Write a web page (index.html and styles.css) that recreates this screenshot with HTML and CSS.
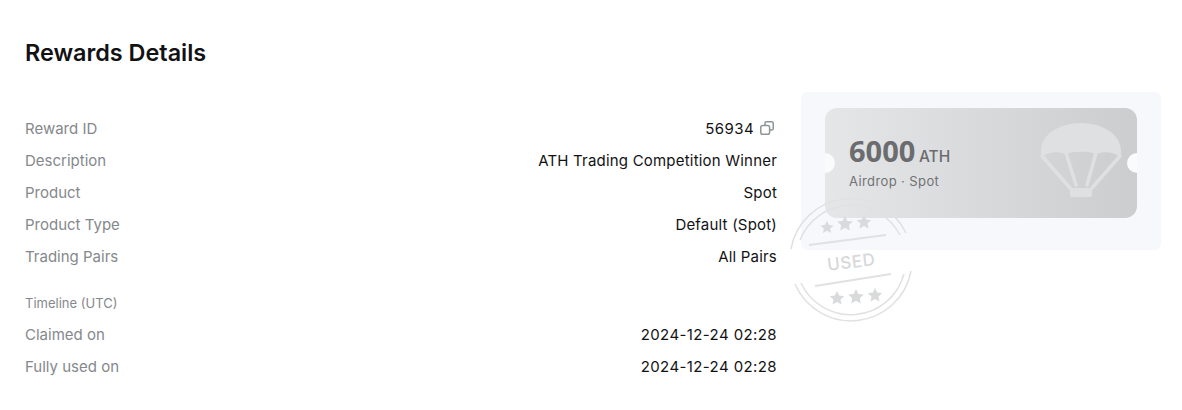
FILE: index.html
```html
<!DOCTYPE html>
<html lang="en">
<head>
    <meta charset="UTF-8">
    <title>Rewards Details</title>
    <link rel="stylesheet" href="styles.css">
</head>
<body>
    <h1>Rewards Details</h1>
    <div class="details">
        <div class="info">
            <div class="row"><span class="label">Reward ID</span><span class="value value-id"><span class="num">56934</span>
                <svg class="copy" viewBox="0 0 14 14" width="14" height="14" fill="none" stroke="#919498" stroke-width="1.500">
                    <path d="M5 4V2.200C5 1.400 5.500.8 6.300.8h5.500c.8 0 1.400.6 1.400 1.400v5.500c0 .8-.6 1.400-1.400 1.400H10"/>
                    <rect x=".8" y="4.400" width="8.800" height="8.800" rx="1.800"/>
                </svg></span></div>
            <div class="row"><span class="label">Description</span><span class="value">ATH Trading Competition Winner</span></div>
            <div class="row"><span class="label">Product</span><span class="value">Spot</span></div>
            <div class="row"><span class="label">Product Type</span><span class="value">Default (Spot)</span></div>
            <div class="row"><span class="label">Trading Pairs</span><span class="value">All Pairs</span></div>
            <div class="timeline">Timeline (UTC)</div>
            <div class="row"><span class="label">Claimed on</span><span class="value num">2024-12-24 02:28</span></div>
            <div class="row"><span class="label">Fully used on</span><span class="value num">2024-12-24 02:28</span></div>
        </div>
        <div class="panel">
            <div class="ticket">
                <div class="amount">6000 <span class="unit">ATH</span></div>
                <div class="kind">Airdrop · Spot</div>
                <svg class="chute" viewBox="0 0 82 76" width="82" height="76">
                    <path d="M1 29C1 12 20 1 41 1s40 11 40 28c0 2-.3 4-1 6-6-5-16-6-24-3-5-3-25-3-30 0-8-3-18-2-24 3-.7-2-1-4-1-6z" fill="#dfe0e2"/>
                    <g stroke="#dfe0e2" stroke-width="3.500" fill="none" stroke-linecap="round">
                        <path d="M2 34L30 66"/>
                        <path d="M26 31L36 63"/>
                        <path d="M56 31L47 63"/>
                        <path d="M80 34L52 66"/>
                    </g>
                    <rect x="30" y="66" width="22" height="9" rx="2" fill="#dfe0e2"/>
                </svg>
            </div>
            <svg class="stamp" viewBox="0 0 124 124" width="124" height="124" fill="none" stroke="#dfe1e3" stroke-width="1.500">
                <path d="M2 51A61 61 0 0 1 117 35"/>
                <path d="M11 42A55 55 0 0 1 111 37"/>
                <path d="M122 73A61 61 0 0 1 6 86"/>
                <path d="M115 76A55 55 0 0 1 12 85"/>
                <path d="M20 47L97 37" stroke-width="2"/>
                <path d="M26 88L102 76" stroke-width="2"/>
                <g fill="#d8dadc" stroke="none">
                    <polygon points="38,23 40,27 44.500,27.500 41.200,30.500 42,35 38,32.800 34,35 34.800,30.500 31.500,27.500 36,27"/>
                    <polygon points="56,18 58.400,23 63.800,23.600 59.800,27.200 60.800,32.500 56,29.800 51.200,32.500 52.200,27.200 48.200,23.600 53.600,23"/>
                    <polygon points="75,17 77.200,21.600 82.200,22.200 78.500,25.600 79.500,30.500 75,28 70.500,30.500 71.500,25.600 67.800,22.200 72.800,21.600"/>
                    <polygon points="48,93 50.200,97.600 55.200,98.200 51.500,101.600 52.500,106.500 48,104 43.500,106.500 44.500,101.600 40.800,98.200 45.800,97.600"/>
                    <polygon points="67,91 69.400,96 74.800,96.600 70.800,100.200 71.800,105.500 67,102.800 62.200,105.500 63.200,100.200 59.200,96.600 64.600,96"/>
                    <polygon points="86,90 88.200,94.600 93.200,95.200 89.500,98.600 90.500,103.500 86,101 81.500,103.500 82.500,98.600 78.800,95.200 83.800,94.600"/>
                </g>
                <text class="stamp-text" x="62" y="70" text-anchor="middle" transform="rotate(-7 62 62)">USED</text>
            </svg>
        </div>
    </div>
</body>
</html>
```

FILE: styles.css
```css
* {
    margin: 0;
    padding: 0;
    box-sizing: border-box;
}

body {
    font-family: Inter, "Noto Sans", Arial, sans-serif;
    background-color: white;
    color: #121214;
    padding: 36px 21px 0 25px;
    height: 410px;
    overflow: hidden;
}

h1 {
    font-size: 23.400px;
    font-weight: 600;
    line-height: 34px;
    margin-bottom: 22px;
}

.details {
    display: flex;
    gap: 24px;
    align-items: flex-start;
}

.info {
    flex: 1;
    padding-top: 20px;
}

.row {
    display: flex;
    justify-content: space-between;
    align-items: center;
    height: 32px;
    font-size: 15px;
}

.label {
    color: #85888c;
}

.value {
    letter-spacing: 0.2px;
}

.value.num,
.value-id .num {
    letter-spacing: 0.4px;
}

.value-id {
    display: flex;
    align-items: center;
    gap: 6px;
    padding-right: 3px;
}

.copy {
    display: block;
}

.timeline {
    margin-top: 16px;
    height: 30px;
    line-height: 30px;
    font-size: 13px;
    color: #85888c;
}

.panel {
    position: relative;
    width: 360px;
    height: 158px;
    padding: 16px 24px;
    background-color: #f6f8fb;
    border-radius: 6px;
}

.ticket {
    position: relative;
    height: 110px;
    padding: 24px;
    border-radius: 12px;
    overflow: hidden;
    background: linear-gradient(90deg, #e5e6e7, #cbcdcf);
    color: #6a6c6f;
}

.ticket::before,
.ticket::after {
    content: "";
    position: absolute;
    top: 45px;
    width: 20px;
    height: 20px;
    border-radius: 50%;
    background-color: #fafbfc;
}

.ticket::before {
    left: -10px;
}

.ticket::after {
    right: -10px;
}

.amount {
    font-family: "Noto Sans", Arial, sans-serif;
    font-size: 29px;
    font-weight: 700;
    line-height: 38px;
    word-spacing: -4px;
}

.unit {
    font-family: Inter, "Noto Sans", Arial, sans-serif;
    font-size: 15.500px;
    font-weight: 500;
}

.kind {
    margin-top: -4px;
    font-size: 13px;
    letter-spacing: 0.4px;
    line-height: 18px;
    color: #707276;
}

.chute {
    position: absolute;
    left: 215px;
    top: 14px;
}

.stamp {
    position: absolute;
    left: -12px;
    top: 106px;
}

.stamp-text {
    font-size: 17px;
    font-weight: 500;
    fill: #d6d8da;
    stroke: none;
    letter-spacing: 0.5px;
}
```
